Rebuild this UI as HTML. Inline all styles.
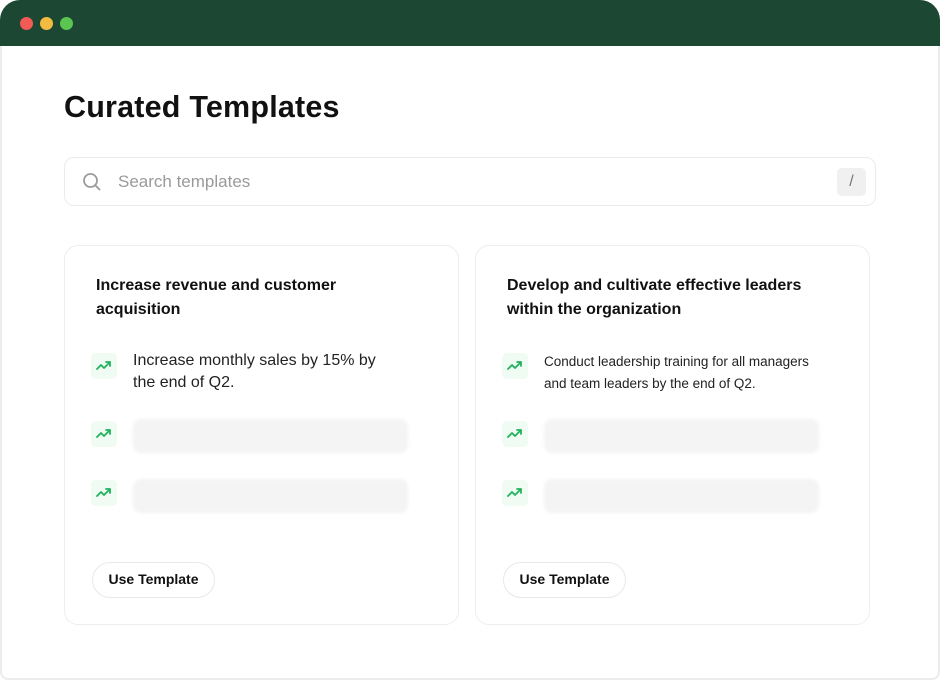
<!DOCTYPE html>
<html><head><style>
*{margin:0;padding:0;box-sizing:border-box}
body{width:940px;height:680px;background:#fff;font-family:"Liberation Sans",sans-serif;position:relative;overflow:hidden;color:#111}
.frame{position:absolute;left:0;top:0;width:940px;height:680px;border:2px solid #ececec;border-top:none;border-radius:20px 20px 8px 8px}
.bar{position:absolute;left:0;top:0;width:940px;height:46px;background:#1b4733;border-radius:20px 20px 0 0}
.dot{position:absolute;top:17px;width:13px;height:13px;border-radius:50%}
h1{position:absolute;left:64px;top:90px;font-size:30.5px;font-weight:bold;letter-spacing:0.2px}
.search{position:absolute;left:64px;top:157px;width:812px;height:49px;border:1.5px solid #ebebeb;border-radius:10px}
.search .ph{position:absolute;left:53px;top:14px;font-size:17px;color:#9a9a9a}
.key{position:absolute;right:9px;top:10px;width:29px;height:28px;background:#f0f0f0;border-radius:5px;color:#777;text-align:center;font-size:16px;line-height:28px}
.card{position:absolute;top:245px;width:395px;height:380px;border:1.5px solid #eeeeee;border-radius:14px}
.title{position:absolute;left:31px;top:28px;font-size:16px;font-weight:bold;line-height:24px;width:320px}
.ic{position:absolute;left:26px;width:26px;height:26px;background:#effbf3;border-radius:5px}
.ic svg{position:absolute;left:5px;top:6px}
.row{position:absolute;left:68px;font-size:16px;line-height:22px;color:#222}
.skel{position:absolute;left:68px;width:275px;height:34px;background:#f4f4f4;border-radius:8px;filter:blur(1.5px)}
.btn{position:absolute;left:27px;top:316px;width:123px;height:36px;border:1.5px solid #e8e8e8;border-radius:18px;font-size:14px;font-weight:bold;text-align:center;line-height:33px}
</style></head><body>
<div class="frame"></div>
<div class="bar"></div>
<div class="dot" style="left:20px;background:#f25a56"></div>
<div class="dot" style="left:40px;background:#f3bb40"></div>
<div class="dot" style="left:60px;background:#5bc551"></div>
<h1>Curated Templates</h1>
<div class="search">
<svg style="position:absolute;left:17px;top:14px" width="20" height="20" viewBox="0 0 20 20" fill="none" stroke="#9a9a9a" stroke-width="1.8"><circle cx="8.5" cy="8.5" r="6.5"/><path d="M13.5 13.5L18 18"/></svg>
<div class="ph">Search templates</div><div class="key">/</div></div>

<div class="card" style="left:64px">
<div class="title">Increase revenue and customer acquisition</div>
<div class="ic" style="top:107px"><svg width="16" height="14" viewBox="0 0 16 14" fill="none" stroke="#22b35e" stroke-width="1.8" stroke-linecap="round" stroke-linejoin="round"><path d="M1 10l4-4 3 3 6-6M10 3h4v4"/></svg></div>
<div class="row" style="top:104px;width:265px">Increase monthly sales by 15% by the end of Q2.</div>
<div class="ic" style="top:175px"><svg width="16" height="14" viewBox="0 0 16 14" fill="none" stroke="#22b35e" stroke-width="1.8" stroke-linecap="round" stroke-linejoin="round"><path d="M1 10l4-4 3 3 6-6M10 3h4v4"/></svg></div>
<div class="skel" style="top:173px"></div>
<div class="ic" style="top:234px"><svg width="16" height="14" viewBox="0 0 16 14" fill="none" stroke="#22b35e" stroke-width="1.8" stroke-linecap="round" stroke-linejoin="round"><path d="M1 10l4-4 3 3 6-6M10 3h4v4"/></svg></div>
<div class="skel" style="top:233px"></div>
<div class="btn">Use Template</div>
</div>

<div class="card" style="left:475px">
<div class="title">Develop and cultivate effective leaders within the organization</div>
<div class="ic" style="top:107px"><svg width="16" height="14" viewBox="0 0 16 14" fill="none" stroke="#22b35e" stroke-width="1.8" stroke-linecap="round" stroke-linejoin="round"><path d="M1 10l4-4 3 3 6-6M10 3h4v4"/></svg></div>
<div class="row" style="top:105px;width:285px;font-size:13.5px">Conduct leadership training for all managers and team leaders by the end of Q2.</div>
<div class="ic" style="top:175px"><svg width="16" height="14" viewBox="0 0 16 14" fill="none" stroke="#22b35e" stroke-width="1.8" stroke-linecap="round" stroke-linejoin="round"><path d="M1 10l4-4 3 3 6-6M10 3h4v4"/></svg></div>
<div class="skel" style="top:173px"></div>
<div class="ic" style="top:234px"><svg width="16" height="14" viewBox="0 0 16 14" fill="none" stroke="#22b35e" stroke-width="1.8" stroke-linecap="round" stroke-linejoin="round"><path d="M1 10l4-4 3 3 6-6M10 3h4v4"/></svg></div>
<div class="skel" style="top:233px"></div>
<div class="btn">Use Template</div>
</div>
</body></html>
